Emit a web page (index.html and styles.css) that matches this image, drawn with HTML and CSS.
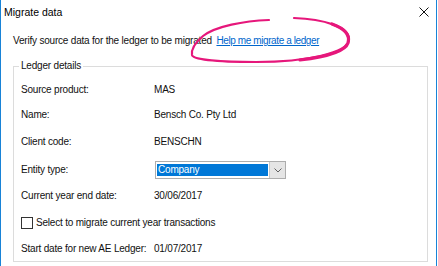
FILE: index.html
```html
<!DOCTYPE html>
<html lang="en">
<head>
  <meta charset="UTF-8">
  <meta name="viewport" content="width=device-width, initial-scale=1.0">
  <title>Migrate data</title>
  <link rel="stylesheet" href="styles.css">
</head>
<body>
  <div class="window">
    <div class="titlebar">
      <span class="title">Migrate data</span>
      <svg class="close" width="10" height="10" viewBox="0 0 10 10">
        <path d="M0.5 0.5 L9.5 9.5 M9.5 0.5 L0.5 9.5" stroke="#111" stroke-width="1" fill="none"/>
      </svg>
    </div>

    <div class="content">
      <p class="intro">Verify source data for the ledger to be migrated <a href="#" class="help-link">Help me migrate a ledger</a></p>

      <fieldset class="group">
        <legend>Ledger details</legend>
        <div class="rows">
          <span class="label">Source product:</span>
          <span class="value">MAS</span>

          <span class="label">Name:</span>
          <span class="value">Bensch Co. Pty Ltd</span>

          <span class="label">Client code:</span>
          <span class="value">BENSCHN</span>

          <span class="label">Entity type:</span>
          <div class="combo">
            <span class="combo-text"><span class="selected">Company</span></span>
            <span class="combo-btn">
              <svg width="8" height="5" viewBox="0 0 8 5">
                <path d="M0.5 0.5 L4 4 L7.5 0.5" stroke="#606060" stroke-width="1" fill="none"/>
              </svg>
            </span>
          </div>

          <span class="label">Current year end date:</span>
          <span class="value">30/06/2017</span>

          <label class="check-row"><span class="checkbox"></span>Select to migrate current year transactions</label>

          <span class="label">Start date for new AE Ledger:</span>
          <span class="value">01/07/2017</span>
        </div>
      </fieldset>
    </div>

    <!-- annotation drawn over the dialog -->
    <svg class="annotation" width="438" height="266" viewBox="0 0 438 266">
      <path d="M294 18 C324 19 349 27 349 39 C349 53 306 62 256 62 C222 62 193 60 192 55 C191 49 196 42 203 36 C216 26 244 21 269 20"
            stroke="#e6177b" stroke-width="2.2" fill="none" stroke-linecap="round"/>
      <path d="M332 24 C346 29 350 36 348 43 C345 52 326 57 300 60"
            stroke="#e6177b" stroke-width="3.2" fill="none" stroke-linecap="round"/>
    </svg>
  </div>
</body>
</html>
```

FILE: styles.css
```css
body {
  margin: 0;
  padding: 0;
  background-color: #ffffff;
  font-family: 'Liberation Sans', Arial, sans-serif;
  font-size: 10px;
  letter-spacing: -0.2px;
  color: #111111;
  overflow: hidden;
}

.window {
  position: relative;
  width: 435px;
  height: 266px;
  border-left: 1px solid #1883d7;
  border-right: 1px solid #1883d7;
  background-color: #ffffff;
}

.titlebar {
  height: 24px;
  display: flex;
  align-items: center;
  justify-content: space-between;
  padding: 0 7px 0 3px;
}

.title {
  font-size: 10.5px;
  letter-spacing: 0;
  color: #000000;
}

.close {
  display: block;
}

.content {
  padding: 0 8px 0 12px;
}

.intro {
  margin: 10px 0 0 0;
  line-height: 14px;
}

.help-link {
  margin-left: 2px;
  color: #0066cc;
  letter-spacing: -0.4px;
  text-decoration: underline;
}

.group {
  margin: 11px 0 0 0;
  padding: 5px 0 0 7px;
  border: 1px solid #dcdcdc;
  min-width: 0;
}

.group legend {
  padding: 0 2px;
  margin-left: -2px;
  line-height: 14px;
}

.rows {
  display: grid;
  grid-template-columns: 133px auto;
  grid-template-rows: 24px 25px 30px 26px 26px 28px 24px;
  align-items: center;
}

.label,
.value {
  line-height: 14px;
}

.combo {
  display: flex;
  width: 131px;
  height: 18px;
  margin-left: 1px;
  box-sizing: border-box;
  border: 1px solid #adadad;
  background-color: #ffffff;
}

.combo-text {
  flex: 1;
  padding: 2px 1px 2px 1px;
  display: flex;
}

.selected {
  flex: 1;
  background-color: #0078d7;
  color: #ffffff;
  line-height: 12px;
  padding-left: 1px;
}

.combo-btn {
  width: 15px;
  display: flex;
  align-items: center;
  justify-content: center;
  background-color: #e5e5e5;
  border-left: 1px solid #c8c8c8;
}

.check-row {
  grid-column: 1 / -1;
  display: flex;
  align-items: center;
  line-height: 14px;
}

.checkbox {
  width: 12px;
  height: 12px;
  box-sizing: border-box;
  border: 1px solid #333333;
  background-color: #ffffff;
  margin-right: 3px;
}

.annotation {
  position: absolute;
  top: 0;
  left: -1px;
  pointer-events: none;
}
```
